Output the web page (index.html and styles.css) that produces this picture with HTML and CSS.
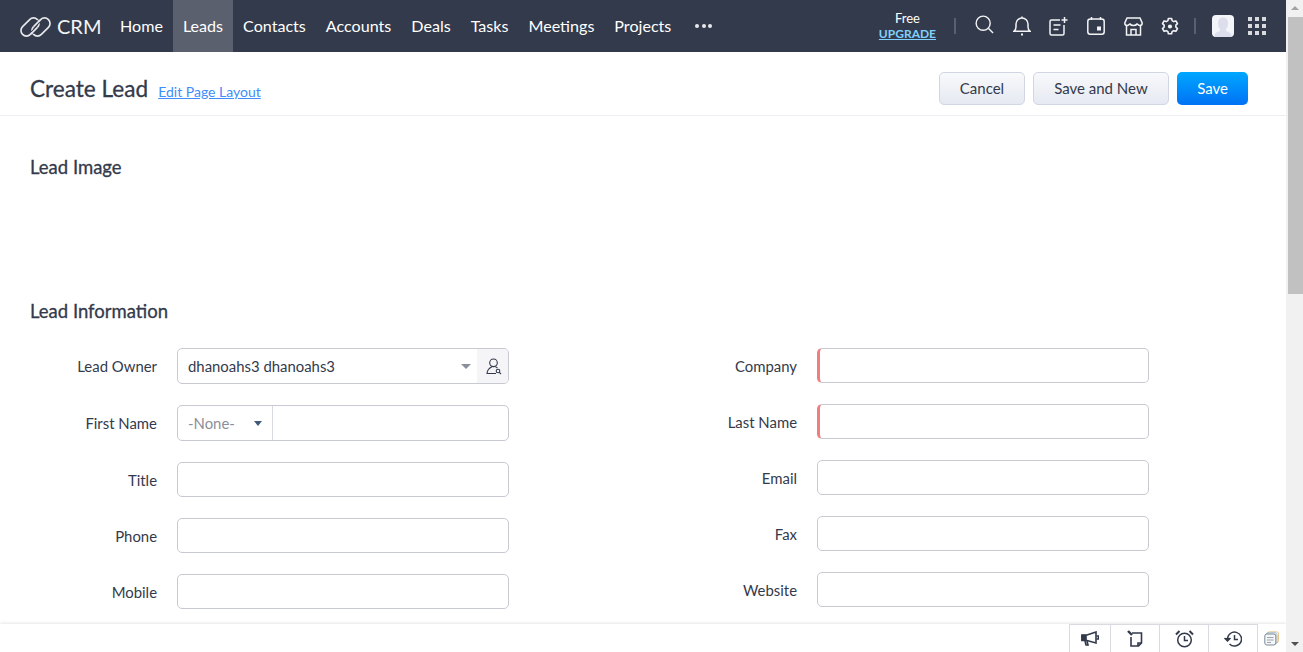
FILE: index.html
```html
<!DOCTYPE html>
<html lang="en">
<head>
<meta charset="utf-8">
<title>Create Lead</title>
<link rel="stylesheet" href="styles.css">
</head>
<body>
<div class="app">
  <header class="topbar">
    <div class="brand">
      <svg class="logo" width="32" height="20" viewBox="0 0 32 20" fill="none" stroke="#e6e7ea" stroke-width="1.700"><rect x="-.5" y="4.500" width="21" height="11" rx="5.500" transform="rotate(-45 10 10)"/><rect x="10.500" y="4.500" width="21" height="11" rx="5.500" transform="rotate(-45 21 10)"/><path d="M12 15.800l5.400-5.400M13.600 9.600L19 4.200" stroke="#333a4b" stroke-width="3.600"/><path d="M11 16.800l6.400-6.400M13.600 9.600L20 3.200"/></svg>
      <span class="brand-name">CRM</span>
    </div>
    <nav class="nav">
      <a class="nav-item">Home</a>
      <a class="nav-item active">Leads</a>
      <a class="nav-item">Contacts</a>
      <a class="nav-item">Accounts</a>
      <a class="nav-item">Deals</a>
      <a class="nav-item">Tasks</a>
      <a class="nav-item">Meetings</a>
      <a class="nav-item">Projects</a>
      <span class="more"><i></i><i></i><i></i></span>
    </nav>
    <div class="tools">
      <div class="plan"><span class="plan-name">Free</span><a class="upgrade">UPGRADE</a></div>
      <span class="divider first"></span>
      <svg class="tool search" width="19" height="19" viewBox="0 0 20 20" fill="none" stroke="#f2f3f5" stroke-width="1.500"><circle cx="8.600" cy="8.600" r="7.400"/><path d="M14 14l5 5"/></svg>
      <svg class="tool bell" width="18" height="20" viewBox="0 0 18 20" fill="none" stroke="#f2f3f5" stroke-width="1.500"><path d="M1 15.200c1.600-1 2-2.200 2-4.400V8a6 6 0 0 1 12 0v2.800c0 2.200.4 3.400 2 4.400z"/><path d="M8 18.600h2" stroke-width="2"/><path d="M9 2V.6"/></svg>
      <svg class="tool note" width="19" height="19" viewBox="0 0 19 19" fill="none" stroke="#f2f3f5" stroke-width="1.500"><path d="M11 3H2.500A1.500 1.500 0 0 0 1 4.500v12A1.500 1.500 0 0 0 2.500 18h11a1.500 1.500 0 0 0 1.500-1.500V8"/><path d="M15.500 0v6M12.500 3h6M4.500 8h7M4.500 12.500h5"/></svg>
      <svg class="tool cal" width="18" height="18" viewBox="0 0 18 18" fill="none" stroke="#f2f3f5" stroke-width="1.500"><rect x=".8" y="2" width="16.400" height="15.200" rx="2.500"/><path d="M4.500 0v3M13.500 0v3"/><rect x="10" y="9.500" width="4" height="4" fill="#f2f3f5" stroke="none"/></svg>
      <svg class="tool store" width="19" height="19" viewBox="0 0 19 19" fill="none" stroke="#f2f3f5" stroke-width="1.500"><path d="M3 1h13l2.200 5c0 1.500-1.200 2.500-2.300 2.500S13.800 7.500 13 7c-.6 1-1.900 1.500-3.500 1.500S6.600 8 6 7c-.8.500-1.800 1.500-2.900 1.500S.8 7.500.8 6z"/><path d="M2.500 8.500V18h14V8.500M7 18v-5.500h5V18"/></svg>
      <svg class="tool gear" width="18" height="19" viewBox="0 0 19 19" fill="none" stroke="#f2f3f5" stroke-width="1.700"><path d="M7.800 1h3.400l.5 2.300 1.700 1 2.300-.7 1.700 2.900-1.700 1.600v2l1.700 1.600-1.700 2.900-2.300-.7-1.700 1-.5 2.300H7.800l-.5-2.300-1.700-1-2.300.7-1.700-2.900 1.700-1.600v-2L1.600 6.500l1.700-2.900 2.300.7 1.700-1z" stroke-linejoin="round"/><circle cx="9.500" cy="9.500" r="2.200" fill="#f2f3f5" stroke="none"/></svg>
      <span class="divider second"></span>
      <span class="avatar"><svg width="22" height="22" viewBox="0 0 22 22"><rect width="22" height="22" rx="4" fill="#f4f5f8"/><path d="M2.500 22v-1.500c0-2.800 4-3.800 5.500-4.800v-1.700C6.600 12.800 6 10.500 6 8c0-3.300 2-5.500 5-5.500S16 4.700 16 8c0 2.500-.6 4.800-2 6v1.700c1.500 1 5.500 2 5.500 4.800V22z" fill="#dcdfeb"/></svg></span>
      <span class="apps"><i></i><i></i><i></i><i></i><i></i><i></i><i></i><i></i><i></i></span>
    </div>
  </header>

  <section class="pagehead">
    <div class="title-wrap">
      <h1 class="title">Create Lead</h1>
      <a class="edit-link">Edit Page Layout</a>
    </div>
    <div class="actions">
      <button class="btn cancel">Cancel</button>
      <button class="btn save-new">Save and New</button>
      <button class="btn primary">Save</button>
    </div>
  </section>

  <main class="content">
    <h2 class="section-title image-title">Lead Image</h2>
    <h2 class="section-title info-title">Lead Information</h2>
    <div class="form">
      <div class="col">
        <div class="row tall">
          <label class="label">Lead Owner</label>
          <div class="field owner">
            <span class="owner-value">dhanoahs3 dhanoahs3</span>
            <span class="caret grey"></span>
            <span class="lookup"><svg width="16" height="17" viewBox="0 0 16 17" fill="none" stroke="#333a4b" stroke-width="1.100"><circle cx="7.500" cy="4.800" r="3.800"/><path d="M6 8.800C3.500 10 1.200 12.500 1 15.500h9M9.500 8.800c.8.400 1.400.8 2 1.400"/><circle cx="12" cy="13" r="1.800"/><path d="M13.300 14.300l1.700 1.700"/></svg></span>
          </div>
        </div>
        <div class="row tall">
          <label class="label">First Name</label>
          <div class="field salutation">
            <span class="sal-select"><span class="sal-value">-None-</span><span class="caret navy"></span></span>
            <span class="sal-input"></span>
          </div>
        </div>
        <div class="row"><label class="label">Title</label><div class="field"></div></div>
        <div class="row"><label class="label">Phone</label><div class="field"></div></div>
        <div class="row"><label class="label">Mobile</label><div class="field"></div></div>
      </div>
      <div class="col">
        <div class="row"><label class="label">Company</label><div class="field required"></div></div>
        <div class="row"><label class="label">Last Name</label><div class="field required"></div></div>
        <div class="row"><label class="label">Email</label><div class="field"></div></div>
        <div class="row"><label class="label">Fax</label><div class="field"></div></div>
        <div class="row"><label class="label">Website</label><div class="field"></div></div>
      </div>
    </div>
  </main>

  <footer class="bottombar">
    <span class="dock">
      <span class="dock-item w1"><svg width="18" height="15" viewBox="0 0 18 15" fill="none" stroke="#333a4b" stroke-width="1.600"><path d="M1 4h5l9-3v11L6 9.500H1z"/><path d="M1 4.500h4v4.500H1z" fill="#333a4b"/><path d="M4 10l1 4h2l-1-4M15.500 5h2v3h-2"/></svg></span>
      <span class="dock-item w2"><svg width="16" height="17" viewBox="0 0 16 17" fill="none" stroke="#333a4b" stroke-width="1.600"><path d="M5 3h9.500v10l-3 3H4V7"/><path d="M11 16v-3h3.500"/><path d="M1 1l4 4" stroke-width="2.400"/></svg></span>
      <span class="dock-item w3"><svg width="19" height="18" viewBox="0 0 19 18" fill="none" stroke="#333a4b" stroke-width="1.500"><circle cx="9.500" cy="10" r="6.800"/><path d="M9.500 6v4.500H13"/><path d="M1 4.500L4.500 1M18 4.500L14.500 1" stroke-width="2"/></svg></span>
      <span class="dock-item w4"><svg width="18" height="16" viewBox="0 0 18 16" fill="none" stroke="#333a4b" stroke-width="1.500"><path d="M3.500 8a7 7 0 1 1 2 5"/><path d="M10.500 4v4.500H14"/><path d="M.5 7l3 3 3-3" fill="#333a4b"/></svg></span>
    </span>
    <svg class="stack" width="15" height="15" viewBox="0 0 15 15" fill="none"><rect x="3.500" y=".8" width="11" height="11" rx="2" stroke="#e8c68a"/><rect x="2" y="1.800" width="11" height="11" rx="2" stroke="#9db8cf"/><rect x=".8" y="3" width="11" height="11" rx="2" stroke="#7d8a96" fill="#f4f6f7"/><path d="M3 6.500h6.500M3 9h6.500M3 11.500h4" stroke="#9aa4ad"/></svg>
  </footer>
</div>
<aside class="scrollbar">
  <span class="arrow up"></span>
  <span class="thumb"></span>
  <span class="track"></span>
  <span class="arrow down"></span>
</aside>
</body>
</html>
```
FILE: styles.css
```css
* { box-sizing: border-box; }
html, body { height: 100%; }
body {
  margin: 0;
  display: flex;
  height: 652px;
  overflow: hidden;
  background: #fff;
  color: #333a4b;
  font-family: Lato, "Liberation Sans", sans-serif;
}
.app {
  width: 1286px;
  height: 652px;
  display: flex;
  flex-direction: column;
  overflow: hidden;
}

/* top bar */
.topbar {
  flex: 0 0 52px;
  display: flex;
  align-items: stretch;
  background: #333a4b;
  color: #fff;
}
.brand {
  display: flex;
  align-items: center;
  padding-left: 20px;
  width: 110px;
}
.logo { flex: none; margin-top: 2px; }
.brand-name { margin-left: 5px; font-size: 20px; color: #f3f4f6; }
.nav { display: flex; align-items: stretch; font-size: 16.100px; }
.nav-item {
  display: flex;
  align-items: center;
  padding: 0 10px 2px;
  color: #fff;
}
.nav-item.active { background: #5a606e; }
.more { display: flex; align-items: center; gap: 2.500px; margin-left: 14px; }
.more i { width: 4px; height: 4px; border-radius: 50%; background: #e8e9ec; }
.tools { margin-left: auto; display: flex; align-items: center; padding-right: 20px; }
.plan {
  display: flex;
  flex-direction: column;
  align-items: center;
  line-height: 15px;
  margin-right: 18px;
  font-size: 13px;
}
.upgrade { font-size: 12px; font-weight: 700; color: #7fd0ff; text-decoration: underline; }
.divider { width: 2px; height: 16px; background: #5a606e; }
.tool { flex: none; }
.search { margin-left: 19px; margin-bottom: 3px; }
.bell { margin-left: 19px; }
.note { margin-left: 18px; }
.cal { margin-left: 19px; }
.store { margin-left: 19px; }
.gear { margin-left: 18px; }
.divider.second { margin-left: 15px; }
.avatar { margin-left: 16px; width: 22px; height: 22px; display: flex; }
.apps {
  margin-left: 14px;
  display: grid;
  grid-template-columns: repeat(3, 4px);
  grid-auto-rows: 4px;
  gap: 3px;
}
.apps i { background: #d8dade; }

/* page heading */
.pagehead {
  flex: 0 0 64px;
  display: flex;
  align-items: center;
  justify-content: space-between;
  padding: 10px 38px 0 30px;
  border-bottom: 1px solid #edeef1;
}
.title-wrap { display: flex; align-items: baseline; }
.title {
  margin: 0;
  font-size: 22.600px;
  font-weight: 400;
  -webkit-text-stroke: .3px #333a4b;
  color: #333a4b;
}
.edit-link { margin-left: 10px; font-size: 14px; color: #408dfb; text-decoration: underline; }
.actions { display: flex; gap: 8px; }
.btn {
  height: 33px;
  padding: 0 20px 2px;
  font: 15px Lato, "Liberation Sans", sans-serif;
  color: #333a4b;
  border: 1px solid #d2d6e2;
  border-radius: 5px;
  background: linear-gradient(#f8f9fb, #e6e9f2);
}
.btn.cancel { padding: 0 19.500px 2px; }
.btn.save-new { padding: 0 20.500px 2px; }
.btn.primary {
  color: #fff;
  border: 0;
  background: linear-gradient(#00a7ff, #0072f5);
}

/* form */
.content { flex: 1; overflow: hidden; padding: 0 0 0 30px; }
.section-title {
  margin: 0;
  font-size: 18.500px;
  font-weight: 400;
  -webkit-text-stroke: .3px #333a4b;
  line-height: 24px;
  color: #333a4b;
}
.image-title { padding-top: 39px; }
.info-title { padding-top: 120px; }
.form {
  display: grid;
  grid-template-columns: 640px 480px;
  margin-top: 25px;
}
.col { display: flex; flex-direction: column; gap: 21px; }
.row { display: flex; align-items: center; height: 35px; }
.row.tall { height: 36px; }
.label {
  width: 127px;
  margin-right: 20px;
  padding-top: 1px;
  text-align: right;
  font-size: 14.900px;
  color: #333a4b;
}
.row.tall .label { padding-top: 0; }
.field {
  width: 332px;
  height: 100%;
  display: flex;
  align-items: stretch;
  background: #fff;
  border: 1px solid #c7c9d3;
  border-radius: 5px;
  font-size: 14.900px;
}
.field.required { border-left: 3px solid #f37d7d; }
.owner { overflow: hidden; }
.owner-value { flex: 1; align-self: center; padding-left: 10px; }
.caret { border-left: 5px solid transparent; border-right: 5px solid transparent; border-top: 5px solid #8b8f9b; }
.caret.grey { align-self: center; margin-right: 6px; }
.caret.navy { border-left-width: 4px; border-right-width: 4px; border-top-color: #3f5a78; }
.lookup {
  flex: 0 0 31px;
  display: flex;
  align-items: center;
  justify-content: center;
  padding-left: 2px;
  background: #f5f5f7;
}
.salutation { overflow: hidden; }
.sal-select {
  width: 95px;
  display: flex;
  align-items: center;
  justify-content: space-between;
  padding: 0 10px;
  border-right: 1px solid #d8dae2;
}
.sal-value { color: #8b8f9b; }
.sal-input { flex: 1; }

/* bottom dock */
.bottombar {
  flex: 0 0 28px;
  display: flex;
  justify-content: flex-end;
  align-items: stretch;
  background: #fff;
  box-shadow: 0 -1px 3px rgba(0, 0, 0, .1);
  padding-right: 7px;
}
.dock { display: flex; border-left: 1px solid #d9dbe0; border-top: 1px solid #d9dbe0; }
.dock-item {
  display: flex;
  align-items: center;
  justify-content: center;
  border-right: 1px solid #d9dbe0;
}
.w1 { width: 41px; }
.w2 { width: 49px; }
.w3 { width: 49px; }
.w4 { width: 49px; }
.stack { align-self: center; margin-left: 6px; }

/* scrollbar */
.scrollbar {
  width: 17px;
  height: 652px;
  display: flex;
  flex-direction: column;
  background: #f1f1f1;
}
.arrow { flex: 0 0 17px; display: flex; }
.arrow.up::before {
  content: "";
  margin: 6px auto 0;
  border-left: 4px solid transparent;
  border-right: 4px solid transparent;
  border-bottom: 4px solid #a3a3a3;
  height: 0;
}
.arrow.down::before {
  content: "";
  margin: 7px auto 0;
  border-left: 4px solid transparent;
  border-right: 4px solid transparent;
  border-top: 4px solid #505050;
  height: 0;
}
.thumb { flex: 0 0 277px; margin-left: 2px; background: #c1c1c1; }
.track { flex: 1; }
```
